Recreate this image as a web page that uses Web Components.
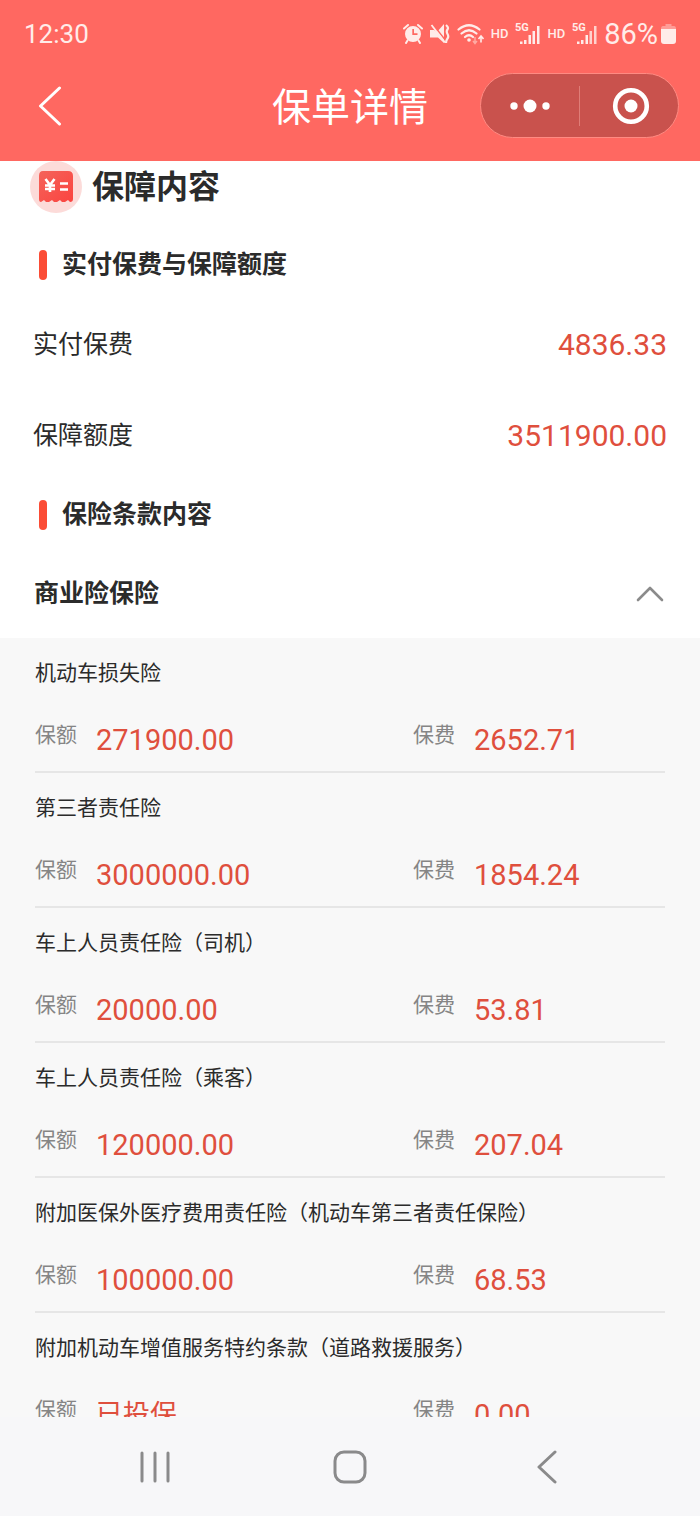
<!DOCTYPE html>
<html lang="zh-CN">
<head>
<meta charset="utf-8">
<meta name="viewport" content="width=device-width, initial-scale=1">
<title>保单详情</title>
<style>
  html, body { margin: 0; height: 100%; }
  body {
    font-family: Roboto, "Noto Sans CJK SC", sans-serif;
    color: #2b2b2b;
    background: #fff;
    --brand: #ff6861;
    --amount: #df4f3d;
    --accent: #fb4c35;
    --muted: #858585;
  }
</style>
</head>
<body>
<policy-app></policy-app>

<template id="t-app">
  <style>
    :host { display: flex; flex-direction: column; height: 100vh; overflow: hidden; }
    header { flex: none; background: var(--brand); color: #fff; }
    main { flex: 1; min-height: 0; overflow: hidden; background: #fff; }
  </style>
  <header>
    <status-bar></status-bar>
    <title-bar>保单详情</title-bar>
  </header>
  <main>
    <page-heading>保障内容</page-heading>
    <sub-heading>实付保费与保障额度</sub-heading>
    <amount-row label="实付保费">4836.33</amount-row>
    <amount-row label="保障额度">3511900.00</amount-row>
    <sub-heading>保险条款内容</sub-heading>
    <accordion-group label="商业险保险">
      <coverage-item name="机动车损失险" insured="271900.00" premium="2652.71"></coverage-item>
      <coverage-item name="第三者责任险" insured="3000000.00" premium="1854.24"></coverage-item>
      <coverage-item name="车上人员责任险（司机）" insured="20000.00" premium="53.81"></coverage-item>
      <coverage-item name="车上人员责任险（乘客）" insured="120000.00" premium="207.04"></coverage-item>
      <coverage-item name="附加医保外医疗费用责任险（机动车第三者责任保险）" insured="100000.00" premium="68.53"></coverage-item>
      <coverage-item name="附加机动车增值服务特约条款（道路救援服务）" insured="已投保" premium="0.00"></coverage-item>
    </accordion-group>
  </main>
  <system-nav></system-nav>
</template>

<template id="t-status">
  <style>
    :host { display: flex; align-items: center; justify-content: space-between; height: 68px; padding: 0 24px; color: #ffece9; }
    .time { font-size: 26px; line-height: 32px; }
    .right { display: flex; align-items: center; gap: 7px; }
    .hd { font-size: 13px; line-height: 16px; font-weight: 500; }
    .charge { display: flex; align-items: center; gap: 3px; font-size: 29px; line-height: 32px; }
    svg { display: block; fill: currentColor; }
    svg text { font: 700 11px Roboto, sans-serif; }
  </style>
  <span class="time">12:30</span>
  <span class="right">
    <svg width="20" height="22" viewBox="0 0 20 22" aria-hidden="true">
      <path fill-rule="evenodd" d="M10 3a8 8 0 1 1 0 16 8 8 0 0 1 0-16zM9.300 6v6h5.200v-1.700H11V6z"/>
      <path d="M1 5.500 5 2M19 5.500 15 2M4.500 17.500 3 20M15.500 17.500 17 20" fill="none" stroke="currentColor" stroke-width="2" stroke-linecap="round"/>
    </svg>
    <svg width="20" height="22" viewBox="0 0 20 22" aria-hidden="true">
      <path d="M0 7h4l3 2 7-8v19L8 14.500H0z"/>
      <path d="M3 1.500 16 18" stroke="#ff6861" stroke-width="1.500"/>
      <path d="M1.500 2 15 19.500" stroke="currentColor" stroke-width="1.800"/>
      <path d="M16 2q3 2.500 1.500 4.500t0 4.500 0 4.500-1.500 4.500" fill="none" stroke="currentColor" stroke-width="2.200"/>
    </svg>
    <svg width="27" height="22" viewBox="0 0 27 22" aria-hidden="true">
      <g fill="none" stroke="currentColor" stroke-width="2.200" stroke-linecap="round">
        <path d="M1.500 6.500q10.500-8.500 21 0M4.500 10.500q7.500-6.500 15 0M8 14q4-3.500 8 0"/>
      </g>
      <circle cx="12" cy="17" r="1.800"/>
      <path d="M18 14v6m-2-2 2 2.500 2-2.500" fill="none" stroke="#ffaaa3" stroke-width="1.500"/>
      <path d="M24 19.500V14m-2.500 2L24 13l2.500 3" fill="none" stroke="currentColor" stroke-width="1.600"/>
    </svg>
    <span class="hd">HD</span>
    <svg width="25" height="24" viewBox="0 0 25 24"><text x="0" y="9">5G</text><path d="M5 19.500h2.500V22H5zM9 18h2.500v4H9zM13.500 13H16v9h-2.500zM17.500 9H20v13h-2.500zM22 4h2.500v18H22z"/></svg>
    <span class="hd">HD</span>
    <svg width="25" height="24" viewBox="0 0 25 24"><text x="0" y="9">5G</text><path d="M5 19.500h2.500V22H5zM9 18h2.500v4H9zM13.500 13H16v9h-2.500z"/><path opacity=".8" d="M17.500 9H20v13h-2.500zM22 4h2.500v18H22z"/></svg>
    <span class="charge">86%<svg width="15" height="20" viewBox="0 0 15 20" aria-hidden="true"><path opacity=".4" d="M4.500 0h6v2H13q2 0 2 3H0q0-3 2-3h2.500z"/><path d="M0 5h15v12q0 3-3 3H3q-3 0-3-3z"/></svg></span>
  </span>
</template>

<template id="t-title">
  <style>
    :host { display: grid; grid-template-columns: 1fr auto 1fr; align-items: center; padding: 5px 21px 23px; }
    button { appearance: none; border: 0; margin: 0; padding: 0; background: none; color: inherit; display: grid; place-items: center; }
    svg { display: block; }
    .back { width: 58px; height: 65px; }
    h1 { margin: 0; padding-top: 4px; font-size: 39px; line-height: 56px; font-weight: 400; }
    .capsule { justify-self: end; display: flex; align-items: center; box-sizing: border-box; width: 199px; height: 65px; border: 1px solid #ff8a82; border-radius: 33px; background: #c9524d; }
    .capsule button { flex: 1; height: 63px; }
    .capsule i { width: 1px; height: 40px; background: #df7d77; }
  </style>
  <button class="back" aria-label="返回"><svg width="24" height="40" viewBox="0 0 24 40" fill="none" stroke="currentColor" stroke-width="3" stroke-linecap="round" stroke-linejoin="round"><path d="M21.500 2 2.500 20l19 18"/></svg></button>
  <h1><slot></slot></h1>
  <div class="capsule">
    <button aria-label="更多"><svg width="40" height="14" viewBox="0 0 40 14" fill="currentColor"><circle cx="4" cy="7" r="3.700"/><circle cx="20" cy="7" r="6.500"/><circle cx="36" cy="7" r="3.700"/></svg></button>
    <i></i>
    <button aria-label="关闭"><svg width="42" height="38" viewBox="0 0 42 38"><circle cx="23" cy="19" r="15.800" fill="none" stroke="currentColor" stroke-width="4.600"/><circle cx="23" cy="19" r="6.500" fill="currentColor"/></svg></button>
  </div>
</template>

<template id="t-heading">
  <style>
    :host { display: flex; align-items: center; gap: 10px; padding: 0 30px; height: 52px; margin-bottom: 18px; }
    h2 { margin: 0; font-size: 32px; line-height: 48px; font-weight: 700; }
    svg { display: block; }
  </style>
  <svg width="52" height="52" viewBox="0 0 52 52" aria-hidden="true">
    <defs>
      <linearGradient id="g" x2="1" y2="1"><stop stop-color="#f4635a"/><stop offset="1" stop-color="#fb4440"/></linearGradient>
    </defs>
    <circle cx="26" cy="26" r="26" fill="#fcdbd9"/>
    <path fill="url(#g)" d="M14 10h24q5 0 5 5v23q0 3-3 3l-2-2-3 2h-3l-2-2-3 2h-3l-2-2-3 2h-3l-2-2-3 2q-2 0-2-3V15q0-5 4-5z"/>
    <path fill="none" stroke="#fff" stroke-width="2.600" d="m15.500 18 4.500 6 4.500-6M15 24.500h10M15 28h10M20 24v7M30 22.500h8M30 28.500h8"/>
  </svg>
  <h2><slot></slot></h2>
</template>

<template id="t-sub">
  <style>
    :host { display: flex; align-items: center; gap: 15px; height: 68px; padding: 0 39px; }
    i { width: 8px; height: 30px; border-radius: 4px; background: var(--accent); }
    h3 { margin: 0; font-size: 25px; line-height: 36px; font-weight: 700; }
  </style>
  <i></i><h3><slot></slot></h3>
</template>

<template id="t-amount">
  <style>
    :host { display: flex; align-items: center; justify-content: space-between; height: 91px; padding: 0 33px; }
    .label { font-size: 25px; line-height: 36px; }
    .value { font-size: 30px; line-height: 38px; color: var(--amount); }
  </style>
  <span class="label"></span><span class="value"><slot></slot></span>
</template>

<template id="t-accordion">
  <style>
    :host { display: block; }
    button { appearance: none; border: 0; margin: 0; width: 100%; height: 89px; padding: 0 36px 0 34px; background: none; color: inherit; font: 700 25px/36px Roboto, "Noto Sans CJK SC", sans-serif; display: flex; align-items: center; justify-content: space-between; }
    .panel { background: #f8f8f8; padding: 0 35px; }
  </style>
  <button aria-expanded="true"><span class="label"></span>
    <svg width="28" height="16" viewBox="0 0 28 16" fill="none" stroke="#8b8b8b" stroke-width="2.600" stroke-linecap="round" stroke-linejoin="round" aria-hidden="true"><path d="M2 14 14 2l12 12"/></svg>
  </button>
  <div class="panel"><slot></slot></div>
</template>

<template id="t-item">
  <style>
    :host { display: block; box-sizing: border-box; height: 135px; border-bottom: 2px solid #e6e6e6; }
    h4 { margin: 0; font-size: 21px; line-height: 70px; height: 68px; font-weight: 400; white-space: nowrap; }
    dl { margin: 0; display: grid; grid-template-columns: 3fr 2fr; }
    div { display: flex; align-items: flex-start; gap: 19px; }
    dt { font-size: 21px; line-height: 58px; color: var(--muted); }
    dd { margin: 0; font-size: 29px; line-height: 68px; color: var(--amount); }
    dd.words { font-size: 27px; }
  </style>
  <h4></h4>
  <dl>
    <div><dt>保额</dt><dd class="insured"></dd></div>
    <div><dt>保费</dt><dd class="premium"></dd></div>
  </dl>
</template>

<template id="t-nav">
  <style>
    :host { flex: none; display: grid; grid-template-columns: repeat(3, 1fr); height: 99px; padding: 0 56px; background: #f7f7f9; color: #8a8a8b; }
    button { appearance: none; border: 0; margin: 0; padding: 0; background: none; color: inherit; display: grid; place-items: center; }
    svg { display: block; fill: none; stroke: currentColor; stroke-width: 3; stroke-linecap: round; stroke-linejoin: round; }
  </style>
  <button aria-label="最近任务"><svg width="34" height="34" viewBox="0 0 34 34"><path d="M5 3v28M18 3v28M31 3v28"/></svg></button>
  <button aria-label="主屏幕"><svg width="34" height="34" viewBox="0 0 34 34"><rect x="2" y="2" width="30" height="30" rx="9"/></svg></button>
  <button aria-label="返回"><svg width="34" height="34" viewBox="0 0 34 34"><path d="M26 2 10 17l16 15"/></svg></button>
</template>

<script>
  const define = (tag, templateId, fill) => {
    customElements.define(tag, class extends HTMLElement {
      connectedCallback() {
        if (this.shadowRoot) return;
        const root = this.attachShadow({ mode: "open" });
        root.append(document.getElementById(templateId).content.cloneNode(true));
        if (fill) fill(this, root);
      }
    });
  };
  const setLabel = (el, root) => { root.querySelector(".label").textContent = el.getAttribute("label"); };

  define("status-bar", "t-status");
  define("title-bar", "t-title");
  define("page-heading", "t-heading");
  define("sub-heading", "t-sub");
  define("amount-row", "t-amount", setLabel);
  define("coverage-item", "t-item", (el, root) => {
    root.querySelector("h4").textContent = el.getAttribute("name");
    for (const key of ["insured", "premium"]) {
      const value = el.getAttribute(key);
      const cell = root.querySelector("." + key);
      cell.textContent = value;
      cell.classList.toggle("words", !/^[\d.]+$/.test(value));
    }
  });
  define("accordion-group", "t-accordion", (el, root) => {
    setLabel(el, root);
    const button = root.querySelector("button");
    const panel = root.querySelector(".panel");
    button.addEventListener("click", () => {
      panel.hidden = !panel.hidden;
      button.setAttribute("aria-expanded", String(!panel.hidden));
    });
  });
  define("system-nav", "t-nav");
  define("policy-app", "t-app");
</script>
</body>
</html>
